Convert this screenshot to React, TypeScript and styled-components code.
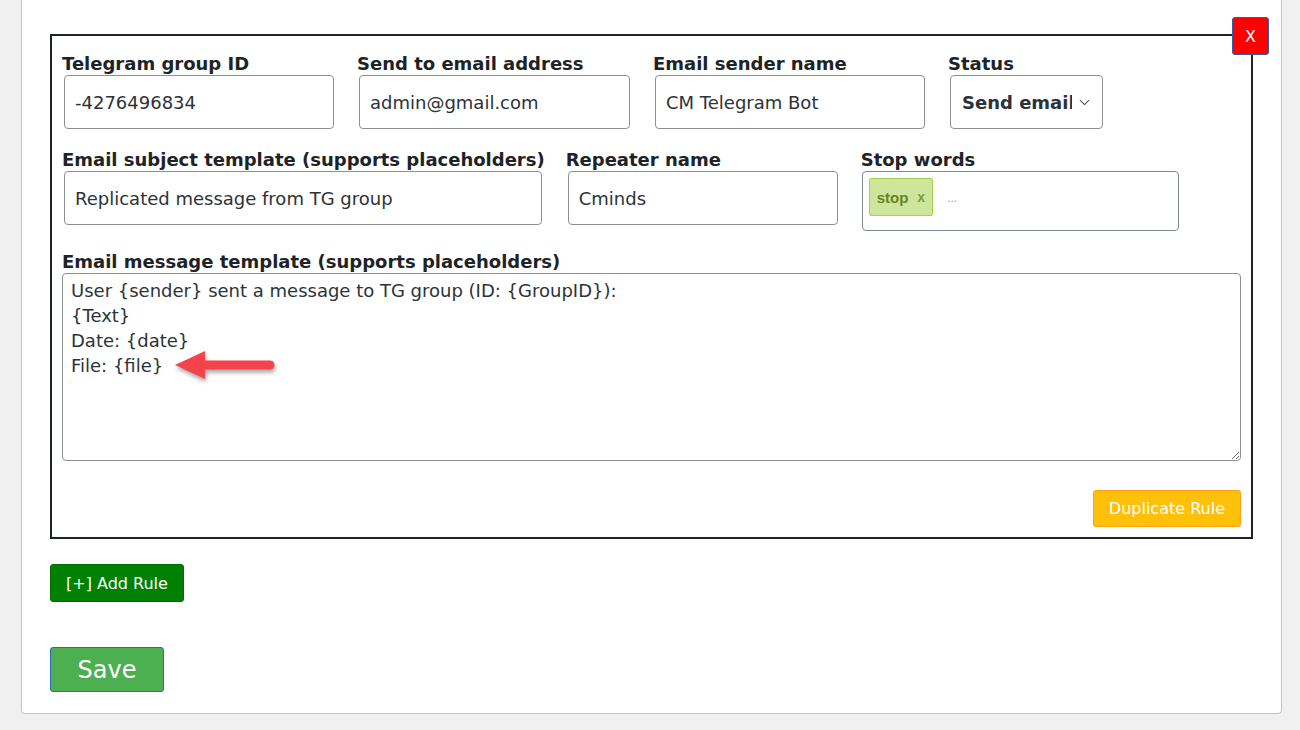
import React from 'react';
import styled, { createGlobalStyle } from 'styled-components';
import { ChevronDown } from 'lucide-react';

const GlobalStyle = createGlobalStyle`
    body {
        margin: 0;
        background: #f0f0f1;
        font-family: 'DejaVu Sans', Verdana, sans-serif;
        color: #1d2327;
    }
`;

const Page = styled.div`
    padding: 0 18px 17px 21px;
`;

const Card = styled.div`
    background: #fff;
    border: 1px solid #c3c4c7;
    border-top: 0;
    border-radius: 0 0 4px 4px;
    padding: 34px 28px 21px;
`;

const RuleBox = styled.div`
    position: relative;
    border: 2px solid #1d2327;
    padding: 18px 10px 10px;
`;

const RemoveButton = styled.button`
    position: absolute;
    top: -19px;
    right: -18px;
    width: 37px;
    height: 38px;
    padding: 0;
    background: #ff0000;
    color: #fff;
    border: 1px solid #2f5f9e;
    border-radius: 3px;
    font: 16px 'DejaVu Sans', Verdana, sans-serif;
    cursor: pointer;
`;

const FieldRow = styled.div`
    display: flex;
    align-items: flex-start;
    gap: 21px;
    margin-bottom: 21px;
`;

const Field = styled.div`
    display: flex;
    flex-direction: column;
`;

const Label = styled.label`
    display: block;
    font-weight: bold;
    font-size: 18px;
    line-height: 20px;
    margin-bottom: 1px;
    white-space: nowrap;
`;

const TextInput = styled.input<{ $w: number }>`
    box-sizing: border-box;
    width: ${(p) => p.$w}px;
    height: 54px;
    margin: 0 2px;
    padding: 0 10px;
    border: 1px solid #8c8f94;
    border-radius: 4px;
    font: 18px 'DejaVu Sans', Verdana, sans-serif;
    color: #2c3338;
    background: #fff;
    outline: none;
`;

const SelectBox = styled.div`
    box-sizing: border-box;
    display: flex;
    align-items: center;
    gap: 4px;
    width: 153px;
    height: 54px;
    margin: 0 2px;
    padding: 0 9px 0 11px;
    border: 1px solid #8c8f94;
    border-radius: 4px;
    color: #2c3338;
`;

const NativeSelect = styled.select`
    appearance: none;
    flex: 1;
    min-width: 0;
    border: 0;
    padding: 0;
    background: transparent;
    font: bold 18px 'DejaVu Sans', Verdana, sans-serif;
    color: #2c3338;
    outline: none;
`;

const TagBox = styled.div`
    box-sizing: border-box;
    display: flex;
    align-items: flex-start;
    gap: 14px;
    width: 317px;
    height: 60px;
    margin-left: 1px;
    padding: 6px;
    border: 1px solid #7e8993;
    border-radius: 4px;
`;

const Tag = styled.span`
    display: inline-flex;
    align-items: center;
    gap: 9px;
    height: 38px;
    box-sizing: border-box;
    padding: 0 7px;
    background: #cde69c;
    border: 1px solid #a5d24a;
    border-radius: 2px;
    font: bold 15px 'Liberation Sans', Arial, sans-serif;
    color: #638421;
`;

const TagRemove = styled.span`
    font-size: 14px;
    color: #7ba03a;
`;

const TagPlaceholder = styled.span`
    align-self: center;
    margin-top: -6px;
    font: 12px 'Liberation Sans', Arial, sans-serif;
    color: #999;
`;

const TemplateArea = styled.div`
    position: relative;
`;

const TemplateText = styled.textarea`
    display: block;
    box-sizing: border-box;
    width: 100%;
    height: 188px;
    padding: 4px 8px;
    border: 1px solid #8c8f94;
    border-radius: 4px;
    font: 18px 'DejaVu Sans', Verdana, sans-serif;
    line-height: 25px;
    color: #2c3338;
    outline: none;
`;

const ArrowMark = styled.svg`
    position: absolute;
    left: 107px;
    top: 73px;
    filter: drop-shadow(1px 3px 2px rgba(0, 0, 0, 0.35));
    pointer-events: none;
`;

const RuleFooter = styled.div`
    display: flex;
    justify-content: flex-end;
    margin-top: 29px;
`;

const Button = styled.button<{ $bg: string; $border: string; $h: number; $size?: number }>`
    height: ${(p) => p.$h}px;
    padding: 0 15px;
    background: ${(p) => p.$bg};
    border: 1px solid ${(p) => p.$border};
    border-radius: 3px;
    color: #fff;
    font: ${(p) => p.$size ?? 16}px 'DejaVu Sans', Verdana, sans-serif;
    cursor: pointer;
`;

const SaveButton = styled(Button)`
    width: 114px;
`;

const AddRow = styled.div`
    margin-top: 25px;
`;

const SaveRow = styled.div`
    margin-top: 45px;
`;

const messageTemplate = `User {sender} sent a message to TG group (ID: {GroupID}):
{Text}
Date: {date}
File: {file}`;

export default function App() {
    return (
        <>
            <GlobalStyle />
            <Page>
                <Card>
                    <RuleBox>
                        <RemoveButton>X</RemoveButton>
                        <FieldRow>
                            <Field>
                                <Label>Telegram group ID</Label>
                                <TextInput $w={270} defaultValue="-4276496834" />
                            </Field>
                            <Field>
                                <Label>Send to email address</Label>
                                <TextInput $w={271} defaultValue="admin@gmail.com" />
                            </Field>
                            <Field>
                                <Label>Email sender name</Label>
                                <TextInput $w={270} defaultValue="CM Telegram Bot" />
                            </Field>
                            <Field>
                                <Label>Status</Label>
                                <SelectBox>
                                    <NativeSelect defaultValue="send">
                                        <option value="send">Send email</option>
                                        <option value="off">Disabled</option>
                                    </NativeSelect>
                                    <ChevronDown size={17} strokeWidth={1.6} color="#50575e" />
                                </SelectBox>
                            </Field>
                        </FieldRow>
                        <FieldRow>
                            <Field>
                                <Label>Email subject template (supports placeholders)</Label>
                                <TextInput $w={478} defaultValue="Replicated message from TG group" />
                            </Field>
                            <Field>
                                <Label>Repeater name</Label>
                                <TextInput $w={270} defaultValue="Cminds" />
                            </Field>
                            <Field>
                                <Label>Stop words</Label>
                                <TagBox>
                                    <Tag>
                                        stop <TagRemove>x</TagRemove>
                                    </Tag>
                                    <TagPlaceholder>...</TagPlaceholder>
                                </TagBox>
                            </Field>
                        </FieldRow>
                        <Field>
                            <Label>Email message template (supports placeholders)</Label>
                            <TemplateArea>
                                <TemplateText defaultValue={messageTemplate} />
                                <ArrowMark width="112" height="40" viewBox="0 0 112 40">
                                    <polygon points="6,19 36,5 36,33" fill="#f5434b" />
                                    <line x1="32" y1="19" x2="101" y2="19" stroke="#f5434b" strokeWidth="9" strokeLinecap="round" />
                                </ArrowMark>
                            </TemplateArea>
                        </Field>
                        <RuleFooter>
                            <Button $bg="#ffc107" $border="#ff9f1a" $h={37}>
                                Duplicate Rule
                            </Button>
                        </RuleFooter>
                    </RuleBox>
                    <AddRow>
                        <Button $bg="#008000" $border="#006d00" $h={38}>
                            [+] Add Rule
                        </Button>
                    </AddRow>
                    <SaveRow>
                        <SaveButton $bg="#4caf50" $border="#2d6ab0" $h={45} $size={24}>
                            Save
                        </SaveButton>
                    </SaveRow>
                </Card>
            </Page>
        </>
    );
}
